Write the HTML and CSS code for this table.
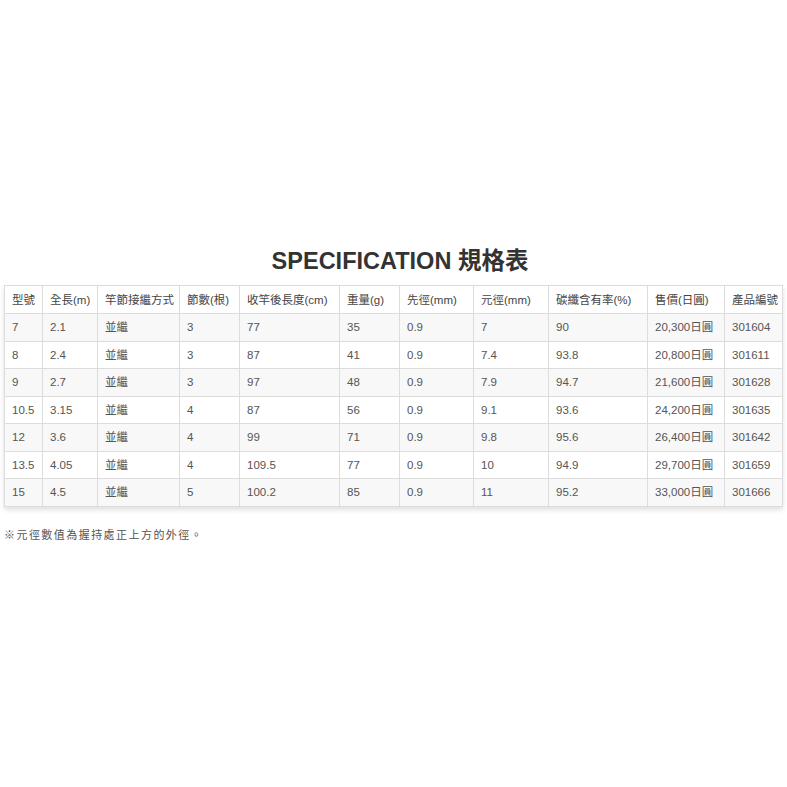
FILE: index.html
```html
<!DOCTYPE html>
<html lang="zh-Hant">
<head>
<meta charset="utf-8">
<link rel="stylesheet" href="styles.css">
</head>
<body>
<div class="page">
  <h2 class="title">SPECIFICATION 規格表</h2>
  <table class="spec">
    <colgroup>
      <col style="width:38px"><col style="width:55px"><col style="width:82px"><col style="width:60px"><col style="width:100px"><col style="width:60px"><col style="width:74px"><col style="width:75px"><col style="width:99px"><col style="width:77px"><col style="width:58px">
    </colgroup>
    <thead>
      <tr><th>型號</th><th>全長(m)</th><th>竿節接繼方式</th><th>節數(根)</th><th>收竿後長度(cm)</th><th>重量(g)</th><th>先徑(mm)</th><th>元徑(mm)</th><th>碳纖含有率(%)</th><th>售價(日圓)</th><th>產品編號</th></tr>
    </thead>
    <tbody>
      <tr><td>7</td><td>2.1</td><td>並繼</td><td>3</td><td>77</td><td>35</td><td>0.9</td><td>7</td><td>90</td><td>20,300日圓</td><td>301604</td></tr>
      <tr><td>8</td><td>2.4</td><td>並繼</td><td>3</td><td>87</td><td>41</td><td>0.9</td><td>7.4</td><td>93.8</td><td>20,800日圓</td><td>301611</td></tr>
      <tr><td>9</td><td>2.7</td><td>並繼</td><td>3</td><td>97</td><td>48</td><td>0.9</td><td>7.9</td><td>94.7</td><td>21,600日圓</td><td>301628</td></tr>
      <tr><td>10.5</td><td>3.15</td><td>並繼</td><td>4</td><td>87</td><td>56</td><td>0.9</td><td>9.1</td><td>93.6</td><td>24,200日圓</td><td>301635</td></tr>
      <tr><td>12</td><td>3.6</td><td>並繼</td><td>4</td><td>99</td><td>71</td><td>0.9</td><td>9.8</td><td>95.6</td><td>26,400日圓</td><td>301642</td></tr>
      <tr><td>13.5</td><td>4.05</td><td>並繼</td><td>4</td><td>109.5</td><td>77</td><td>0.9</td><td>10</td><td>94.9</td><td>29,700日圓</td><td>301659</td></tr>
      <tr><td>15</td><td>4.5</td><td>並繼</td><td>5</td><td>100.2</td><td>85</td><td>0.9</td><td>11</td><td>95.2</td><td>33,000日圓</td><td>301666</td></tr>
    </tbody>
  </table>
  <p class="note">※元徑數值為握持處正上方的外徑。</p>
</div>
</body>
</html>
```
FILE: styles.css
```css
html, body {
  margin: 0;
  padding: 0;
  background: #fff;
}
.page {
  padding: 247px 4px 0 4px;
  font-family: "Liberation Sans", "Noto Sans CJK TC", sans-serif;
  color: #555;
}
.title {
  margin: 0 0 10px 0;
  text-align: center;
  font-size: 23.5px;
  line-height: 28px;
  font-weight: bold;
  color: #333;
  padding-left: 13px;
}
.spec {
  border-collapse: collapse;
  table-layout: fixed;
  width: 779px;
  font-size: 11.5px;
  box-shadow: 0 3px 5px rgba(0,0,0,0.12);
}
.spec th, .spec td {
  border: 1px solid #dcdcdc;
  text-align: left;
  padding: 0 0 0 7px;
  height: 26.5px;
  line-height: 14px;
  white-space: nowrap;
  overflow: hidden;
}
.spec th {
  font-weight: normal;
  color: #444;
  height: 27px;
}
.spec tbody tr:nth-child(odd) {
  background: #f8f8f8;
}
.note {
  margin: 21px 0 0 0;
  font-size: 11px;
  line-height: 14px;
  letter-spacing: 1.45px;
  color: #555;
}
```
